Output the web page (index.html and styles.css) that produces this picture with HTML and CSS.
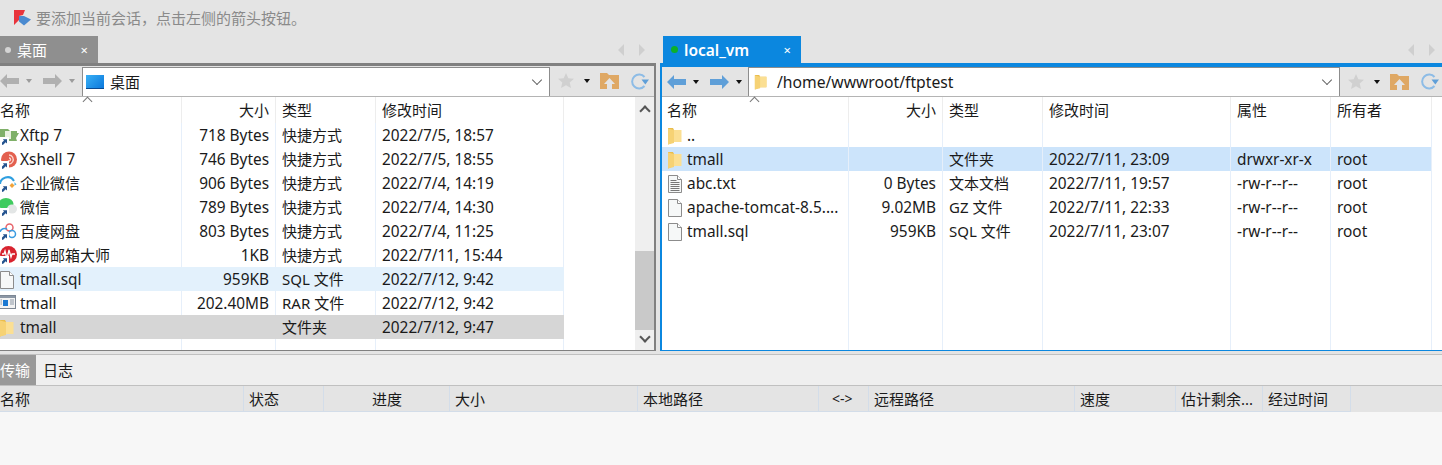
FILE: index.html
```html
<!DOCTYPE html>
<html lang="zh-CN">
<head>
  <meta charset="UTF-8">
  <title>Xftp 7</title>
  <link rel="stylesheet" href="styles.css">
</head>
<body>
  <!-- shared icons -->
  <svg class="defs" width="0" height="0">
    <symbol id="folder" viewBox="0 0 16 18">
      <path d="M1 1h5l1 2h7v12H7l-6 2.500z" fill="#e9bd4c"/>
      <path d="M6 3h8.500v12H6z" fill="#fbdf93"/>
      <path d="M1 1.500l6 1.500v13l-6 1.500z" fill="#f6d274"/>
    </symbol>
    <symbol id="doc" viewBox="0 0 16 18">
      <path d="M1.500.5h9l4 4v13h-13z" fill="#f6f8f8" stroke="#8c8c8c"/>
      <path d="M10.500.5v4h4" fill="#fff" stroke="#8c8c8c"/>
    </symbol>
    <symbol id="txt" viewBox="0 0 16 18">
      <path d="M1.500.5h9l4 4v13h-13z" fill="#f6f8f8" stroke="#8c8c8c"/>
      <path d="M10.500.5v4h4" fill="#fff" stroke="#8c8c8c"/>
      <path d="M3.500 5.500h6M3.500 7.500h9M3.500 9.500h9M3.500 11.500h9M3.500 13.500h9M3.500 15.500h9" stroke="#777"/>
    </symbol>
    <symbol id="shortcut" viewBox="0 0 9 9">
      <rect width="9" height="9" fill="#fff"/>
      <path d="M2 8V5.500L4 3.500 2.800 2.300H7V6.500L5.600 5.200 3.500 7.500z" fill="#24538f"/>
    </symbol>
    <symbol id="arrow" viewBox="0 0 19 14">
      <path d="M0 7l7-7v4h12v6H7v4z"/>
    </symbol>
    <symbol id="star" viewBox="0 0 16 16">
      <path d="M8 0l2.300 5.200 5.700.5-4.300 3.800 1.300 5.600L8 12.200 3 15.100l1.300-5.600L0 5.700l5.700-.5z" fill="#d0d0d0"/>
    </symbol>
    <symbol id="up" viewBox="0 0 19 16">
      <path d="M0 0h7l2 2h10v14h-7v-5h3L9.500 5 4 11h3v5H0z" fill="#dfa864"/>
    </symbol>
    <symbol id="refresh" viewBox="0 0 19 17">
      <path d="M14.500 4A7 7 0 1 0 14.500 13" fill="none" stroke="#8dbce6" stroke-width="2"/>
      <path d="M11.500 6.500h7.500l-3.700 5z" fill="#5f9fd8"/>
    </symbol>
  </svg>

  <div class="notice">
    <svg class="notice-icon" width="17" height="16" viewBox="0 0 17 16">
      <path d="M0 0h11l-2 5-4 1v4l-5 5z" fill="#e8343c"/>
      <path d="M5 6h5l7 3.500-7 6-5-4z" fill="#4a8ad0"/>
    </svg>
    要添加当前会话，点击左侧的箭头按钮。
  </div>

  <div class="panes">
    <!-- local pane -->
    <section class="pane pane-local">
      <div class="tabbar">
        <div class="tab tab-local">
          <span class="tab-dot"></span><span class="tab-name">桌面</span><span class="tab-close">×</span>
        </div>
        <div class="tab-nav"><span class="nav-left"></span><span class="nav-right"></span></div>
      </div>
      <div class="pane-body">
        <div class="toolbar">
          <div class="history">
            <svg class="hist-arrow" width="19" height="14"><use href="#arrow"/></svg><span class="caret"></span>
            <svg class="hist-arrow flip" width="19" height="14"><use href="#arrow"/></svg><span class="caret"></span>
          </div>
          <div class="address">
            <span class="desk-icon"></span>
            <span class="address-text">桌面</span>
            <span class="chevron"></span>
          </div>
          <div class="tools">
            <svg width="16" height="16"><use href="#star"/></svg><span class="caret dark"></span>
            <svg width="19" height="16"><use href="#up"/></svg>
            <svg width="19" height="17"><use href="#refresh"/></svg>
          </div>
        </div>
        <div class="list-wrap">
          <div class="list list-local">
            <div class="row head">
              <div class="cell first">名称<span class="sort"></span></div><div class="cell num">大小</div><div class="cell">类型</div><div class="cell">修改时间</div>
            </div>
            <div class="row">
              <div class="cell first"><span class="ico">
                <svg width="20" height="18" viewBox="0 0 20 18"><path d="M0 2h9l2 2h7v2h2l-3 5 1 3H0z" fill="#7fb069"/><path d="M6 4h6v8H6z" fill="#e9f1e0"/></svg>
                <svg class="sc" width="9" height="9"><use href="#shortcut"/></svg></span>Xftp 7</div>
              <div class="cell num">718 Bytes</div><div class="cell">快捷方式</div><div class="cell">2022/7/5, 18:57</div>
            </div>
            <div class="row">
              <div class="cell first"><span class="ico">
                <svg width="18" height="18" viewBox="0 0 18 18"><circle cx="10" cy="8.500" r="8" fill="#e3604f"/><path d="M10 4a4.500 4.500 0 1 1-4 7M10 7a1.500 1.500 0 1 1-1 2.500" fill="none" stroke="#fbd6cf" stroke-width="1.300"/></svg>
                <svg class="sc" width="9" height="9"><use href="#shortcut"/></svg></span>Xshell 7</div>
              <div class="cell num">746 Bytes</div><div class="cell">快捷方式</div><div class="cell">2022/7/5, 18:55</div>
            </div>
            <div class="row">
              <div class="cell first cjk"><span class="ico">
                <svg width="18" height="18" viewBox="0 0 18 18"><path d="M1 11a7.500 7.500 0 0 1 14-4" fill="none" stroke="#2f9fe0" stroke-width="2"/><path d="M13 9l2.500 2.500L13 14l-2.500-2.500z" fill="#f1a33b"/><path d="M15.500 8l2 2.500-2 1z" fill="#4fb3e6"/></svg>
                <svg class="sc" width="9" height="9"><use href="#shortcut"/></svg></span>企业微信</div>
              <div class="cell num">906 Bytes</div><div class="cell">快捷方式</div><div class="cell">2022/7/4, 14:19</div>
            </div>
            <div class="row">
              <div class="cell first cjk"><span class="ico">
                <svg width="18" height="18" viewBox="0 0 18 18"><ellipse cx="7" cy="6" rx="7.500" ry="6" fill="#3fcb5e"/><ellipse cx="13" cy="11" rx="5" ry="4.500" fill="#e3e6e6"/></svg>
                <svg class="sc" width="9" height="9"><use href="#shortcut"/></svg></span>微信</div>
              <div class="cell num">789 Bytes</div><div class="cell">快捷方式</div><div class="cell">2022/7/4, 14:30</div>
            </div>
            <div class="row">
              <div class="cell first cjk"><span class="ico">
                <svg width="18" height="18" viewBox="0 0 18 18"><circle cx="10.500" cy="5.500" r="3.500" fill="none" stroke="#e8636a" stroke-width="1.500"/><circle cx="13" cy="12" r="3.500" fill="none" stroke="#3a9be0" stroke-width="1.500"/><path d="M1 13a5 5 0 0 1 7-6" fill="none" stroke="#3a9be0" stroke-width="1.500"/></svg>
                <svg class="sc" width="9" height="9"><use href="#shortcut"/></svg></span>百度网盘</div>
              <div class="cell num">803 Bytes</div><div class="cell">快捷方式</div><div class="cell">2022/7/4, 11:25</div>
            </div>
            <div class="row">
              <div class="cell first cjk"><span class="ico">
                <svg width="19" height="18" viewBox="0 0 19 18"><circle cx="9.500" cy="8.500" r="8.500" fill="#d8232f"/><path d="M3 8h2l1-3 2 8 2-9 2 7 1-3h3" fill="none" stroke="#fff" stroke-width="1.300"/></svg>
                <svg class="sc" width="9" height="9"><use href="#shortcut"/></svg></span>网易邮箱大师</div>
              <div class="cell num">1KB</div><div class="cell">快捷方式</div><div class="cell">2022/7/11, 15:44</div>
            </div>
            <div class="row hover">
              <div class="cell first"><span class="ico"><svg width="16" height="18"><use href="#doc"/></svg></span>tmall.sql</div>
              <div class="cell num">959KB</div><div class="cell">SQL 文件</div><div class="cell">2022/7/12, 9:42</div>
            </div>
            <div class="row">
              <div class="cell first"><span class="ico">
                <svg width="17" height="14" viewBox="0 0 17 14"><rect x=".5" y=".5" width="16" height="13" fill="#f3f3f3" stroke="#7d8794"/><rect x="1" y="1" width="15" height="2" fill="#8c97a5"/><rect x="4" y="5" width="5" height="6" fill="#1a78d2"/><path d="M11 5h4M11 7h4M11 9h4M1.500 5h1.500M1.500 7h1.500M1.500 9h1.500" stroke="#8c97a5"/></svg></span>tmall</div>
              <div class="cell num">202.40MB</div><div class="cell">RAR 文件</div><div class="cell">2022/7/12, 9:42</div>
            </div>
            <div class="row grey">
              <div class="cell first"><span class="ico"><svg width="16" height="18"><use href="#folder"/></svg></span>tmall</div>
              <div class="cell num"></div><div class="cell">文件夹</div><div class="cell">2022/7/12, 9:47</div>
            </div>
            <div class="row filler">
              <div class="cell first"></div><div class="cell"></div><div class="cell"></div><div class="cell"></div>
            </div>
          </div>
          <div class="scrollbar">
            <span class="sb-up"></span>
            <div class="sb-track"><div class="sb-thumb"></div></div>
            <span class="sb-down"></span>
          </div>
        </div>
      </div>
    </section>

    <!-- remote pane -->
    <section class="pane pane-remote">
      <div class="tabbar">
        <div class="tab tab-remote">
          <span class="tab-dot green"></span><span class="tab-name bold">local_vm</span><span class="tab-close">×</span>
        </div>
        <div class="tab-nav"><span class="nav-left"></span><span class="nav-right"></span></div>
      </div>
      <div class="pane-body">
        <div class="toolbar">
          <div class="history">
            <svg class="hist-arrow blue" width="19" height="14"><use href="#arrow"/></svg><span class="caret dark"></span>
            <svg class="hist-arrow blue flip" width="19" height="14"><use href="#arrow"/></svg><span class="caret dark"></span>
          </div>
          <div class="address">
            <svg class="addr-folder" width="14" height="18"><use href="#folder"/></svg>
            <span class="address-text">/home/wwwroot/ftptest</span>
            <span class="chevron"></span>
          </div>
          <div class="tools">
            <svg width="16" height="16"><use href="#star"/></svg><span class="caret dark"></span>
            <svg width="19" height="16"><use href="#up"/></svg>
            <svg width="19" height="17"><use href="#refresh"/></svg>
          </div>
        </div>
        <div class="list-wrap">
          <div class="list list-remote">
            <div class="row head">
              <div class="cell first">名称<span class="sort"></span></div><div class="cell num">大小</div><div class="cell">类型</div><div class="cell">修改时间</div><div class="cell">属性</div><div class="cell">所有者</div>
            </div>
            <div class="row">
              <div class="cell first"><span class="ico"><svg width="16" height="18"><use href="#folder"/></svg></span>..</div>
              <div class="cell num"></div><div class="cell"></div><div class="cell"></div><div class="cell"></div><div class="cell"></div>
            </div>
            <div class="row selected">
              <div class="cell first"><span class="ico"><svg width="16" height="18"><use href="#folder"/></svg></span>tmall</div>
              <div class="cell num"></div><div class="cell">文件夹</div><div class="cell">2022/7/11, 23:09</div><div class="cell">drwxr-xr-x</div><div class="cell">root</div>
            </div>
            <div class="row">
              <div class="cell first"><span class="ico"><svg width="16" height="18"><use href="#txt"/></svg></span>abc.txt</div>
              <div class="cell num">0 Bytes</div><div class="cell">文本文档</div><div class="cell">2022/7/11, 19:57</div><div class="cell">-rw-r--r--</div><div class="cell">root</div>
            </div>
            <div class="row">
              <div class="cell first"><span class="ico"><svg width="16" height="18"><use href="#doc"/></svg></span>apache-tomcat-8.5....</div>
              <div class="cell num">9.02MB</div><div class="cell">GZ 文件</div><div class="cell">2022/7/11, 22:33</div><div class="cell">-rw-r--r--</div><div class="cell">root</div>
            </div>
            <div class="row">
              <div class="cell first"><span class="ico"><svg width="16" height="18"><use href="#doc"/></svg></span>tmall.sql</div>
              <div class="cell num">959KB</div><div class="cell">SQL 文件</div><div class="cell">2022/7/11, 23:07</div><div class="cell">-rw-r--r--</div><div class="cell">root</div>
            </div>
            <div class="row filler">
              <div class="cell first"></div><div class="cell"></div><div class="cell"></div><div class="cell"></div><div class="cell"></div><div class="cell"></div>
            </div>
          </div>
        </div>
      </div>
    </section>
  </div>

  <!-- transfer panel -->
  <div class="bottom-tabs">
    <div class="btab active">传输</div>
    <div class="btab">日志</div>
  </div>
  <div class="transfer-head">
    <div class="tcell c-name">名称</div>
    <div class="tcell c-status">状态</div>
    <div class="tcell c-progress">进度</div>
    <div class="tcell c-size">大小</div>
    <div class="tcell c-local">本地路径</div>
    <div class="tcell c-dir">&lt;-&gt;</div>
    <div class="tcell c-remote">远程路径</div>
    <div class="tcell c-speed">速度</div>
    <div class="tcell c-eta">估计剩余...</div>
    <div class="tcell c-elapsed">经过时间</div>
  </div>
  <div class="transfer-body"></div>
</body>
</html>
```

FILE: styles.css
```css
* {
  box-sizing: border-box;
}

html, body {
  height: 100%;
}

body {
  margin: 0;
  width: 1442px;
  height: 465px;
  overflow: hidden;
  display: flex;
  flex-direction: column;
  background: #e4e4e4;
  color: #1a1a1a;
  font-family: "Noto Sans", "Noto Sans CJK SC", sans-serif;
  font-size: 15px;
  line-height: 20px;
}

.defs {
  display: block;
  height: 0;
}

/* Top hint */
.notice {
  height: 36px;
  flex: none;
  display: flex;
  align-items: center;
  gap: 5px;
  padding-left: 14px;
  color: #8a8a8a;
  font-size: 15px;
}

/* Two panes */
.panes {
  height: 315px;
  flex: none;
  display: flex;
}

.pane {
  display: flex;
  flex-direction: column;
}

.pane-local {
  width: 660px;
}

.pane-remote {
  flex: 1;
  min-width: 0;
}

.tabbar {
  height: 27px;
  flex: none;
  display: flex;
  justify-content: space-between;
}

.tab {
  display: flex;
  align-items: center;
  color: #fff;
  height: 27px;
}

.tab-local {
  width: 98px;
  background: #8f8f8f;
  padding-left: 5px;
}

.tab-remote {
  width: 138px;
  margin-left: 3px;
  background: #0b87df;
  padding-left: 8px;
}

.tab-dot {
  width: 6px;
  height: 6px;
  border-radius: 50%;
  background: #d4d4d4;
  margin-right: 6px;
}

.tab-dot.green {
  background: #0cb02a;
  width: 7px;
  height: 7px;
  margin-right: 6px;
}

.tab-name {
  flex: 1;
}

.tab-name.bold {
  font-size: 15.500px;
  font-weight: 600;
}

.tab-close {
  font-size: 13px;
  margin-right: 10px;
}

.tab-nav {
  display: flex;
  align-items: center;
  gap: 15px;
  padding-right: 7px;
}

.nav-left, .nav-right {
  width: 0;
  height: 0;
  border-top: 6px solid transparent;
  border-bottom: 6px solid transparent;
}

.nav-left {
  border-right: 6px solid #cfcfcf;
}

.nav-right {
  border-left: 6px solid #cfcfcf;
}

.pane-local .tab-nav {
  padding-right: 15px;
}

.pane-body {
  flex: 1;
  min-height: 0;
  display: flex;
  flex-direction: column;
}

.pane-local .pane-body {
  width: 656px;
  border-top: 3px solid #808080;
  border-right: 2px solid #808080;
  border-bottom: 1px solid #808080;
}

.pane-remote .pane-body {
  border-top: 4px solid #0b87df;
  border-left: 2px solid #0b87df;
  border-bottom: 1px solid #0b87df;
}

/* Toolbar */
.toolbar {
  height: 31px;
  flex: none;
  display: flex;
  align-items: center;
  background: #e4e4e4;
  border-bottom: 1px solid #b4b4b4;
}

.pane-remote .toolbar {
  height: 30px;
}

.history {
  width: 82px;
  flex: none;
  display: flex;
  align-items: center;
}

.pane-remote .history {
  width: 87px;
  padding-left: 5px;
}

.hist-arrow {
  fill: #b0b0b0;
}

.hist-arrow.blue {
  fill: #5f9fd8;
}

.hist-arrow.flip {
  transform: scaleX(-1);
}

.caret {
  width: 0;
  height: 0;
  margin: 0 11px 0 7px;
  border-left: 3.500px solid transparent;
  border-right: 3.500px solid transparent;
  border-top: 4px solid #9c9c9c;
}

.caret.dark {
  border-top-color: #111;
}

.caret:last-child {
  margin-right: 0;
}

.address {
  width: 468px;
  height: 29px;
  flex: none;
  align-self: flex-end;
  display: flex;
  align-items: center;
  background: #fff;
  border: 1px solid #8d8d8d;
  border-bottom: 0;
  padding-left: 3px;
  position: relative;
}

.pane-remote .address {
  width: 592px;
  margin-left: -1px;
}

.desk-icon {
  width: 18px;
  height: 14px;
  margin-right: 6px;
  background: linear-gradient(135deg, #39b0f5, #0b78dc);
  border-bottom: 1px solid #0a4a90;
}

.addr-folder {
  margin-left: 2px;
  margin-right: 9px;
}

.address-text {
  font-size: 15px;
}

.pane-remote .address-text {
  font-size: 15.700px;
}

.chevron {
  position: absolute;
  right: 8px;
  top: 8px;
  width: 8px;
  height: 8px;
  border-right: 1px solid #555;
  border-bottom: 1px solid #555;
  transform: rotate(45deg) scale(.9);
}

.tools {
  flex: 1;
  display: flex;
  align-items: center;
  padding-left: 8px;
  gap: 0;
}

.tools .caret {
  margin: 0 10px 0 10px;
}

.tools svg:last-child {
  margin-left: 11px;
}

/* File lists */
.list-wrap {
  flex: 1;
  min-height: 0;
  display: flex;
  background: #fff;
}

.list {
  flex: 1;
  min-width: 0;
  height: 100%;
  display: flex;
  flex-direction: column;
}

.row {
  height: 24px;
  flex: none;
  display: grid;
  align-items: stretch;
}

.list-local .row {
  grid-template-columns: 182px 94px 100px 188px;
  width: 564px;
}

.list-remote .row {
  grid-template-columns: 187px 94px 100px 188px 100px 101px;
  width: 770px;
}

.row.head {
  height: 26px;
}

.row.filler {
  flex: 1;
}

.cell {
  display: flex;
  align-items: center;
  padding: 2px 6px 0;
  white-space: nowrap;
  overflow: hidden;
  font-size: 15.400px;
  border-right: 1px solid #e6effa;
}

/* type column and chinese names run a bit tighter than latin text */
.cell:nth-child(3), .cell.cjk, .head .cell {
  font-size: 15px;
  padding-top: 0;
}

.cell.first {
  padding-left: 0;
}

.list-remote .cell.first {
  padding-left: 5px;
}

.cell.num {
  justify-content: flex-end;
}

.head .cell {
  border-right-color: #ededed;
  padding-bottom: 1px;
}

.head .cell.first {
  position: relative;
  overflow: visible;
}

.sort {
  position: absolute;
  right: 90px;
  top: 1px;
  width: 7px;
  height: 7px;
  border-left: 1px solid #777;
  border-top: 1px solid #777;
  transform: rotate(45deg);
}

.ico {
  width: 20px;
  height: 18px;
  flex: none;
  position: relative;
  display: block;
}

.ico svg {
  position: absolute;
  left: 0;
  top: 0;
}

.list-local .ico svg:first-child {
  left: -1px;
}

.ico .sc {
  left: 0;
  top: 10px;
}

.row.hover {
  background: #e3f1fc;
}

.row.selected {
  background: #cce4fb;
}

.row.grey {
  background: #d6d6d6;
}

.row.grey .cell, .row.hover .cell {
  border-right-color: transparent;
}

/* Scrollbar */
.scrollbar {
  width: 19px;
  flex: none;
  margin-left: auto;
  display: flex;
  flex-direction: column;
  align-items: center;
  background: #efefef;
}

.list-local {
  flex: none;
  width: 635px;
}

.sb-up, .sb-down {
  width: 8px;
  height: 8px;
  flex: none;
  border-left: 2px solid #555;
  border-top: 2px solid #555;
  transform: rotate(45deg);
}

.sb-up {
  margin: 10px 0 6px;
}

.sb-down {
  margin: 3px 0 9px;
  transform: rotate(225deg);
}

.sb-track {
  flex: 1;
  width: 100%;
  display: flex;
  flex-direction: column;
  justify-content: flex-end;
}

.sb-thumb {
  height: 79px;
  background: #c9c9c9;
}

/* Transfer panel */
.bottom-tabs {
  height: 32px;
  flex: none;
  margin-top: 3px;
  display: flex;
  background: #efefef;
  border-top: 1px solid #c0c0c0;
  border-bottom: 1px solid #c0c0c0;
}

.btab {
  width: 36px;
  display: flex;
  align-items: center;
}

.btab.active {
  background: #999;
  color: #fff;
}

.btab:last-child {
  width: auto;
  padding-left: 7px;
}

.transfer-head {
  height: 26px;
  flex: none;
  display: grid;
  grid-template-columns: 244px 80px 126px 188px 181px 50px 206px 101px 87px 88px;
  width: 1351px;
  background: #e4e4e4;
  border-bottom: 1px solid #d3dde9;
}

.tcell {
  display: flex;
  align-items: center;
  padding-left: 5px;
  white-space: nowrap;
  border-right: 1px solid #d3dde9;
}

.c-name {
  padding-left: 0;
}

.c-progress {
  justify-content: flex-end;
  padding-right: 47px;
}

.c-dir {
  padding-left: 13px;
  font-size: 14px;
}

.transfer-body {
  flex: 1;
  background: #f7f7f7;
}
```
